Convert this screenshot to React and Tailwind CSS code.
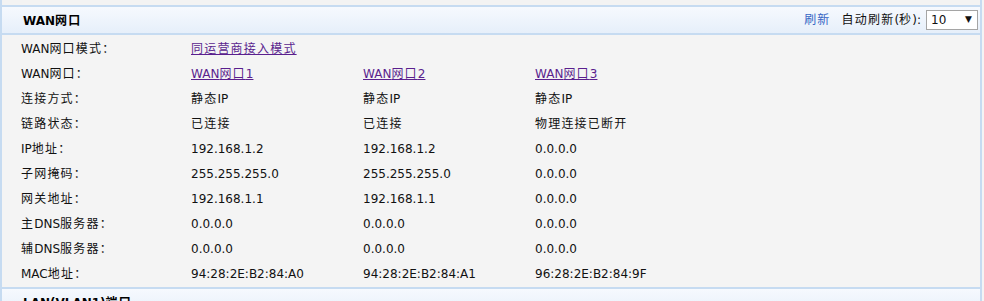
import React from 'react';

const ports = ['WAN网口1', 'WAN网口2', 'WAN网口3'];

const rows = [
  ['连接方式：', ['静态IP', '静态IP', '静态IP']],
  ['链路状态：', ['已连接', '已连接', '物理连接已断开']],
  ['IP地址：', ['192.168.1.2', '192.168.1.2', '0.0.0.0']],
  ['子网掩码：', ['255.255.255.0', '255.255.255.0', '0.0.0.0']],
  ['网关地址：', ['192.168.1.1', '192.168.1.1', '0.0.0.0']],
  ['主DNS服务器：', ['0.0.0.0', '0.0.0.0', '0.0.0.0']],
  ['辅DNS服务器：', ['0.0.0.0', '0.0.0.0', '0.0.0.0']],
  ['MAC地址：', ['94:28:2E:B2:84:A0', '94:28:2E:B2:84:A1', '96:28:2E:B2:84:9F']],
];

// chinese glyphs in the original are a bit wider than latin ones, so space them out
function T({ children }) {
  const parts = String(children).split(/([\u3000-\u9fff\uff00-\uffef]+)/);
  return parts.map((p, i) =>
    i % 2 === 1 ? (
      <span key={i} className="tracking-[1.2px]">{p}</span>
    ) : (
      p
    )
  );
}

function SectionHeader({ title, children }) {
  return (
    <div className="flex h-[30px] items-center justify-between border-y-2 border-[#c6dbf1] bg-gradient-to-b from-[#f6f9fe] to-[#e6effa] pl-[21px] pr-[2px]">
      <span className="pt-[1px] text-[12px] font-bold text-black"><T>{title}</T></span>
      {children}
    </div>
  );
}

export default function App() {
  return (
    <div
      className="h-[301px] w-[984px] overflow-hidden bg-[#f4f4f4] text-[12px] text-[#111]"
      style={{ fontFamily: '"DejaVu Sans", "Noto Sans CJK SC", sans-serif' }}
    >
      <div className="mr-[2px] h-full border-x-2 border-[#c6dbf1]">
        <div className="h-[5px] bg-[#f3f3f3]" />
        <SectionHeader title="WAN网口">
          <div className="flex items-center">
            <a className="mr-[11px] cursor-pointer text-[#3566c4]"><T>刷新</T></a>
            <span className="mr-[5px]"><T>自动刷新(秒):</T></span>
            <div className="flex h-[20px] w-[52px] items-center justify-between border border-[#a5a5a5] bg-white pl-[4px] pr-[5px]">
              <span>10</span>
              <span className="text-[9px]">▼</span>
            </div>
          </div>
        </SectionHeader>

        <div className="pl-[19px] pt-[1px]">
          <div className="flex h-[25px] items-center">
            <span className="w-[170px]"><T>WAN网口模式：</T></span>
            <a className="cursor-pointer text-[#5a1f8e] underline"><T>同运营商接入模式</T></a>
          </div>
          <div className="flex h-[25px] items-center">
            <span className="w-[170px]"><T>WAN网口：</T></span>
            {ports.map((p) => (
              <span key={p} className="w-[172px]">
                <a className="cursor-pointer text-[#5a1f8e] underline"><T>{p}</T></a>
              </span>
            ))}
          </div>
          {rows.map(([label, vals]) => (
            <div key={label} className="flex h-[25px] items-center">
              <span className="w-[170px]"><T>{label}</T></span>
              {vals.map((v, i) => (
                <span key={i} className="w-[172px]"><T>{v}</T></span>
              ))}
            </div>
          ))}
        </div>

        <div className="mt-[1px]">
          <SectionHeader title="LAN(VLAN1)端口" />
        </div>
      </div>
    </div>
  );
}
